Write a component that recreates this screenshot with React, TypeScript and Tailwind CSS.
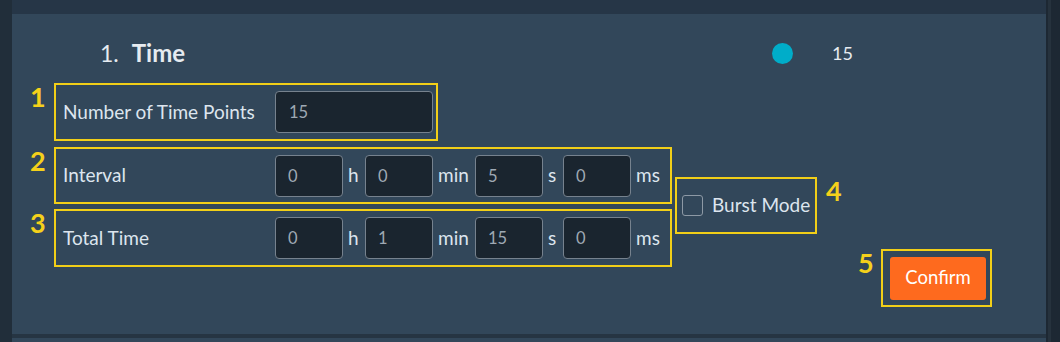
import React from "react";

const units = [
  { key: "h", w: "w-[22px]" },
  { key: "min", w: "w-[42px]" },
  { key: "s", w: "w-[20px]" },
  { key: "ms", w: "w-[39px]" },
];

function Num({ n, className = "" }: { n: string; className?: string }) {
  return (
    <div className={`text-[27px] leading-none font-bold text-[#f5d11b] ${className}`}>{n}</div>
  );
}

function TimeRow({ label, values, tall }: { label: string; values: string[]; tall?: boolean }) {
  return (
    <div
      className={`w-[618px] ${tall ? "h-[58px]" : "h-[57px]"} border-2 border-[#f2cf18] flex items-center pl-[7px]`}
    >
      <div className="w-[212px] text-[19px] text-[#dde5ee]">{label}</div>
      {values.map((v, i) => (
        <React.Fragment key={units[i].key}>
          <input
            defaultValue={v}
            className="w-[68px] h-[42px] bg-[#1a252f] border border-[#76828e] rounded-[4px] pl-[12px] text-[16.5px] text-[#9fa9b4] outline-none"
          />
          <div className={`${units[i].w} pl-[5px] text-[19px] text-[#dde5ee]`}>{units[i].key}</div>
        </React.Fragment>
      ))}
    </div>
  );
}

export default function App() {
  return (
    <div className="w-[1060px] h-[342px] bg-[#1e2a35] flex overflow-hidden font-['Lato',sans-serif]">
      <div className="w-[12px] bg-[#212e3a]" />
      <div className="w-[1034px] flex flex-col">
        <div className="h-[14px] bg-[#263647]" />
        <div className="h-[320px] bg-[#32475a]">
          <div className="h-[59px] pt-[19px] pl-[88px] flex items-center">
            <div className="w-[672px] text-[#e6ebf0]">
              <span className="text-[23px]">1.</span>
              <span className="text-[24px] font-bold ml-[13px]">Time</span>
            </div>
            <div className="w-[21px] h-[21px] rounded-full bg-[#00adc9]" />
            <div className="ml-[39px] text-[18px] text-[#e6ebf0]">15</div>
          </div>

          <div className="mt-[10px] pl-[18px] flex">
            <div className="flex flex-col">
              <div className="flex">
                <Num n="1" className="w-[24px]" />
                <div className="w-[384px] h-[58px] border-2 border-[#f2cf18] flex items-center pl-[7px]">
                  <div className="w-[212px] text-[19px] text-[#dde5ee]">Number of Time Points</div>
                  <input
                    defaultValue="15"
                    className="w-[158px] h-[42px] bg-[#1a252f] border border-[#76828e] rounded-[4px] pl-[13px] text-[16.5px] text-[#9fa9b4] outline-none"
                  />
                </div>
              </div>
              <div className="flex mt-[6px]">
                <Num n="2" className="w-[24px]" />
                <TimeRow label="Interval" values={["0", "0", "5", "0"]} />
              </div>
              <div className="flex mt-[5px]">
                <Num n="3" className="w-[24px]" />
                <TimeRow label="Total Time" values={["0", "1", "15", "0"]} tall />
              </div>
            </div>

            <div className="ml-[3px] flex flex-col">
              <div className="flex mt-[94px]">
                <div className="w-[142px] h-[57px] border-2 border-[#f2cf18] flex items-center pl-[5px]">
                  <div className="w-[21px] h-[21px] rounded-[3px] border border-[#8d99a5]" />
                  <div className="ml-[9px] text-[19px] text-[#dde5ee]">Burst Mode</div>
                </div>
                <Num n="4" className="ml-[9px]" />
              </div>
              <div className="flex mt-[15px] ml-[183px]">
                <Num n="5" className="w-[23px]" />
                <div className="w-[111px] h-[58px] border-2 border-[#f2cf18] flex items-center pl-[7px]">
                  <button className="w-[96px] h-[43px] rounded-[3px] bg-[#fe6a1e] text-white text-[18.5px]">
                    Confirm
                  </button>
                </div>
              </div>
            </div>
          </div>
        </div>
        <div className="h-[4px] bg-[#263543]" />
        <div className="flex-1 bg-[#32475a]" />
      </div>
      <div className="flex-1 bg-[#1d2833] flex">
        <div className="w-[2px]" />
        <div className="w-[3px] bg-[#26323d]" />
      </div>
    </div>
  );
}
